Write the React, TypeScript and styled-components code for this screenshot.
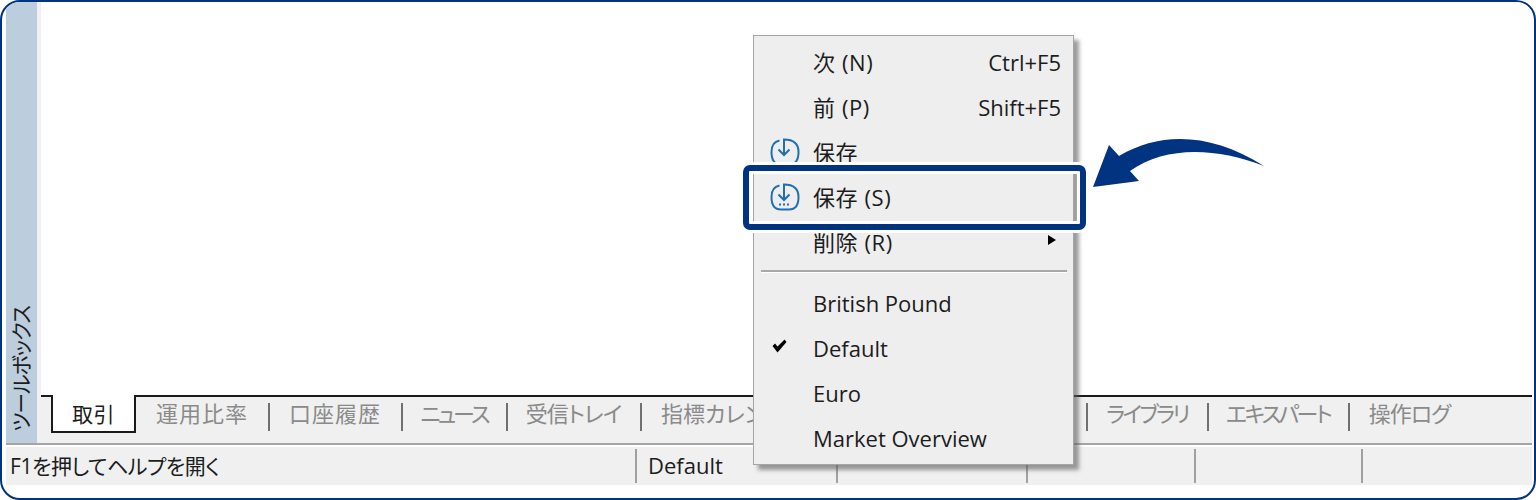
import { Fragment } from "react";
import styled, { createGlobalStyle } from "styled-components";

const GlobalStyle = createGlobalStyle`
  html, body { margin: 0; padding: 0; background: #fff; }
  body {
    font-family: "Open Sans", "Noto Sans CJK JP", sans-serif;
    font-feature-settings: "palt";
  }
`;

const NAVY = "#003380";

const Frame = styled.div`
  position: relative;
  box-sizing: border-box;
  width: 1536px;
  height: 500px;
  padding: 0 2px 13px 4px;
  border: 2px solid ${NAVY};
  border-radius: 20px;
  background: #fff;
  display: flex;
  flex-direction: column;
  overflow: hidden;
`;

const Workspace = styled.div`
  flex: 1;
  display: flex;
  min-height: 0;
  border-bottom: 2px solid #a5a5a5;
`;

const SideBar = styled.div`
  width: 31px;
  background: #bccddd;
  display: flex;
  justify-content: center;
  align-items: flex-end;
  padding-bottom: 11px;
`;

const SideLabel = styled.span`
  writing-mode: vertical-rl;
  text-orientation: sideways;
  transform: rotate(180deg);
  font-size: 21px;
  letter-spacing: -1.1px;
  color: #1c1c1c;
  line-height: 1;
  white-space: nowrap;
`;

const SideGap = styled.div`
  width: 4px;
  background: #f0f0f0;
`;

const Main = styled.div`
  flex: 1;
  display: flex;
  flex-direction: column;
`;

const Canvas = styled.div`
  flex: 1;
  background: #fff;
`;

const TabBar = styled.div`
  height: 48px;
  box-sizing: border-box;
  border-top: 2px solid #1a1a1a;
  background: #f0f0f0;
  display: flex;
  align-items: flex-start;
  padding-left: 10px;
`;

const ActiveTab = styled.div`
  width: 85px;
  height: 38px;
  flex: none;
  box-sizing: border-box;
  margin: -2px 20px 0 0;
  border: 2px solid #1a1a1a;
  border-top: none;
  background: #fff;
  font-size: 21px;
  letter-spacing: 0.5px;
  line-height: 38px;
  text-align: center;
  color: #1c1c1c;
`;

const Tab = styled.div<{ $width: number; $tracking: number; $start?: boolean }>`
  width: ${(p) => p.$width}px;
  flex: none;
  display: flex;
  justify-content: ${(p) => (p.$start ? "flex-start" : "center")};
  height: 33px;
  font-size: 22px;
  letter-spacing: ${(p) => p.$tracking}px;
  line-height: 33px;
  color: #8a8a8a;
  white-space: nowrap;
`;

const TabDivider = styled.div`
  width: 2px;
  height: 28px;
  flex: none;
  margin: 6px 19px 0 20px;
  background: #707070;
`;

const StatusBar = styled.div`
  height: 40px;
  box-sizing: border-box;
  background: #f0f0f0;
  padding-top: 2px;
  display: grid;
  grid-template-columns: 629px 201px 190px 168px 167px 167px;
  border-top: 2px solid #fff;
`;

const StatusCell = styled.div`
  box-sizing: border-box;
  height: 34px;
  padding-left: 4px;
  font-size: 22px;
  line-height: 32px;
  color: #1c1c1c;
  white-space: nowrap;
  & + & {
    border-left: 2px solid #a0a0a0;
    padding-left: 11px;
  }
`;

const StatusHint = styled(StatusCell)`
  font-size: 21px;
  letter-spacing: -0.45px;
  line-height: 34px;
`;

const Menu = styled.div`
  position: absolute;
  left: 751px;
  top: 33px;
  width: 321px;
  height: 430px;
  box-sizing: border-box;
  padding-top: 4px;
  border: 1.5px solid #a5a5a5;
  background: #eeeeee;
  box-shadow: 5px 5px 4px rgba(90, 90, 90, 0.6);
  display: flex;
  flex-direction: column;
  z-index: 2;
`;

const MenuRow = styled.div`
  height: 44.8px;
  flex: none;
  display: grid;
  grid-template-columns: 59px 1fr auto 12px;
  align-items: center;
  font-size: 22px;
  color: #1c1c1c;
  white-space: nowrap;
`;

const MenuIcon = styled.div`
  display: flex;
  justify-content: center;
  align-items: center;
  padding-left: 2px;
`;

const JapaneseLabel = styled.span`
  letter-spacing: 0.6px;
  margin-bottom: 2px;
`;

const Shortcut = styled.span`
  text-align: right;
`;

const SubmenuMark = styled.span`
  width: 0;
  height: 0;
  justify-self: end;
  margin-right: 5px;
  border-left: 8px solid #000;
  border-top: 5px solid transparent;
  border-bottom: 5px solid transparent;
  transform: translateY(-2px);
`;

const MenuSeparator = styled.div`
  height: 2px;
  flex: none;
  margin: 6px 6px 8px 7px;
  background: #a8a8a8;
  border-bottom: 1px solid #fff;
`;

const CheckIcon = styled.svg`
  margin: 0 10px 5px 0;
`;

const Highlight = styled.div`
  position: absolute;
  left: 741px;
  top: 163px;
  width: 343px;
  height: 65px;
  box-sizing: border-box;
  border: 6px solid ${NAVY};
  border-radius: 7px;
  box-shadow: 0 0 0 3px #fff, inset 0 0 0 3px #fff;
  z-index: 3;
`;

const Arrow = styled.svg`
  position: absolute;
  left: 1088px;
  top: 136px;
  z-index: 3;
`;

const tabs = [
  { label: "運用比率", width: 92, tracking: 1 },
  { label: "口座履歴", width: 92, tracking: 1 },
  { label: "ニュース", width: 64, tracking: -3 },
  { label: "受信トレイ", width: 93, tracking: -0.8 },
  { label: "指標カレンダー", width: 405, tracking: 0, start: true },
  { label: "ライブラリ", width: 80, tracking: -2.6 },
  { label: "エキスパート", width: 100, tracking: -2.7 },
];

const items = ["British Pound", "Default", "Euro", "Market Overview"];

function SaveIcon({ dots }: { dots?: boolean }) {
  return (
    <svg width="30" height="28" viewBox="0 0 30 28" fill="none" stroke="#1f6fb2" strokeWidth="2">
      <path d="M9.5 2.5 C4 3.5 1.5 7 1.5 14 C1.5 22.5 5 26.5 11 26.5 H19 C25 26.5 28.5 22.5 28.5 14 C28.5 5.5 24 1.5 14 1.5 V16" />
      <path d="M8.5 11.5 L14 17 L19.5 11.5" />
      {dots && <path d="M9 21.5 H11 M13 21.5 H15 M17 21.5 H19" strokeWidth="1.8" />}
    </svg>
  );
}

function CheckMark() {
  return (
    <CheckIcon width="15" height="14" viewBox="0 0 15 14">
      <path d="M0.5 7 L3 4.5 L5.5 7.5 L12.5 0.5 L14.5 3 L5.5 13.5 Z" fill="#000" />
    </CheckIcon>
  );
}

export default function App() {
  return (
    <>
      <GlobalStyle />
      <Frame>
        <Workspace>
          <SideBar>
            <SideLabel>ツールボックス</SideLabel>
          </SideBar>
          <SideGap />
          <Main>
            <Canvas />
            <TabBar>
              <ActiveTab>取引</ActiveTab>
              {tabs.map((tab) => (
                <Fragment key={tab.label}>
                  <Tab $width={tab.width} $tracking={tab.tracking} $start={tab.start}>
                    {tab.label}
                  </Tab>
                  <TabDivider />
                </Fragment>
              ))}
              <Tab $width={81} $tracking={-1}>
                操作ログ
              </Tab>
            </TabBar>
          </Main>
        </Workspace>
        <StatusBar>
          <StatusHint>F1を押してヘルプを開く</StatusHint>
          <StatusCell>Default</StatusCell>
          <StatusCell />
          <StatusCell />
          <StatusCell />
          <StatusCell />
        </StatusBar>
        <Menu>
          <MenuRow>
            <span />
            <JapaneseLabel>次 (N)</JapaneseLabel>
            <Shortcut>Ctrl+F5</Shortcut>
          </MenuRow>
          <MenuRow>
            <span />
            <JapaneseLabel>前 (P)</JapaneseLabel>
            <Shortcut>Shift+F5</Shortcut>
          </MenuRow>
          <MenuRow>
            <MenuIcon>
              <SaveIcon />
            </MenuIcon>
            <JapaneseLabel>保存</JapaneseLabel>
          </MenuRow>
          <MenuRow>
            <MenuIcon>
              <SaveIcon dots />
            </MenuIcon>
            <JapaneseLabel>保存 (S)</JapaneseLabel>
          </MenuRow>
          <MenuRow>
            <span />
            <JapaneseLabel>削除 (R)</JapaneseLabel>
            <SubmenuMark />
          </MenuRow>
          <MenuSeparator />
          {items.map((item) => (
            <MenuRow key={item}>
              <MenuIcon>{item === "Default" && <CheckMark />}</MenuIcon>
              <span>{item}</span>
            </MenuRow>
          ))}
        </Menu>
        <Highlight />
        <Arrow width="180" height="52" viewBox="1090 138 180 52">
          <path
            d="M1093 187 L1109 145 L1119 156 C1160 132 1210 132 1264 166 C1215 147 1165 146 1130 171 L1139 181 Z"
            fill={NAVY}
          />
        </Arrow>
      </Frame>
    </>
  );
}
